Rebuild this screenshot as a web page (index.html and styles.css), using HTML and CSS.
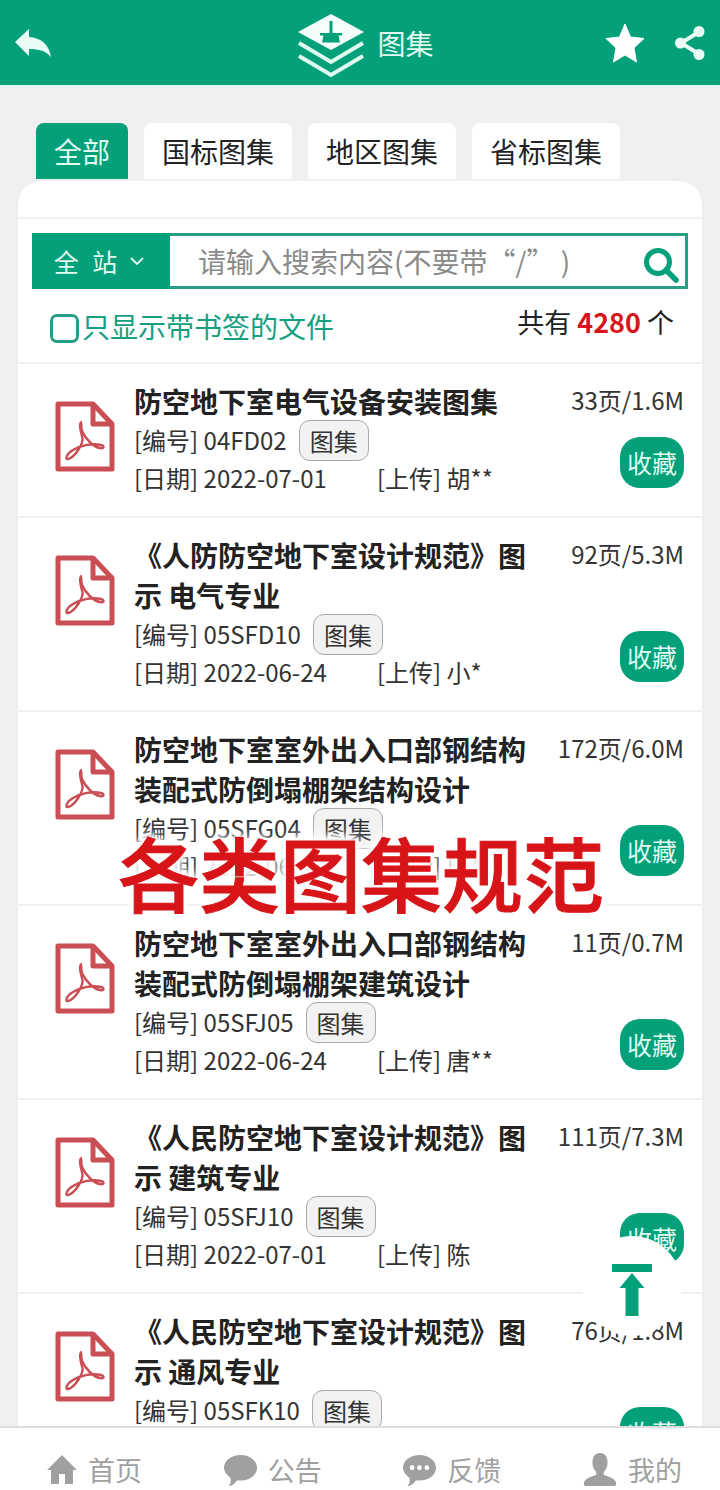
FILE: index.html
```html
<!DOCTYPE html>
<html lang="zh-CN">

<head>
    <meta charset="UTF-8">
    <meta name="viewport" content="width=device-width, initial-scale=1.0">
    <title>图集</title>
    <link rel="stylesheet" href="styles.css">
</head>

<body>
    <svg class="defs" width="0" height="0">
        <symbol id="pdf" viewBox="0 0 60 72">
            <path d="M3 3H38L57 23V68H3Z" fill="none" stroke="#c94f55" stroke-width="5" stroke-linejoin="round" />
            <path d="M38 3V23H57" fill="none" stroke="#c94f55" stroke-width="5" stroke-linejoin="round" />
            <path d="M27 21c-3 0-2 8 0 14c3 7-8 22-14 23c-3 1-2-5 5-9c8-5 20-7 28-5c4 1 3 4-1 3c-6-1-14-8-18-17c-1-4-1-9 0-9z" fill="none" stroke="#c94f55" stroke-width="2.4" />
        </symbol>
    </svg>

    <div class="page">
        <header class="topbar">
            <svg class="back" viewBox="0 0 38 30" width="38" height="30">
                <path d="M1 13L15 0V8C27 9 35 15 37 28C32 22 25 20 15 20V27Z" fill="#e9fbf5" />
            </svg>
            <div class="brand">
                <svg viewBox="0 0 68 64" width="68" height="64">
                    <path d="M34 0L67 18L34 36L1 18Z" fill="#f4fffb" />
                    <path d="M32.500 7h3v12h-3z M23 19h22v2.500h-22z M25 28.500l1.500-7h15l1.500 7z" fill="#03a07a" />
                    <path d="M2 29L34 48L66 29M2 42L34 61L66 42" fill="none" stroke="#dffaf1" stroke-width="4" />
                </svg>
                <span>图集</span>
            </div>
            <div class="top-actions">
                <svg viewBox="0 0 40 40" width="40" height="40">
                    <path d="M20 1L25.500 14L39 15.500L29 25L31.500 39L20 32L8.500 39L11 25L1 15.500L14.500 14Z" fill="#fff" stroke="#fff" stroke-linejoin="round" />
                </svg>
                <svg viewBox="0 0 32 36" width="32" height="36">
                    <path d="M25 7L7 18L25 29" fill="none" stroke="#e9fbf5" stroke-width="4" />
                    <circle cx="25" cy="6.500" r="5.500" fill="#e9fbf5" />
                    <circle cx="6.500" cy="18" r="5.500" fill="#e9fbf5" />
                    <circle cx="25" cy="29.500" r="5.500" fill="#e9fbf5" />
                </svg>
            </div>
        </header>

        <main class="content">
            <nav class="tabs">
                <a class="tab active">全部</a>
                <a class="tab">国标图集</a>
                <a class="tab">地区图集</a>
                <a class="tab">省标图集</a>
            </nav>

            <section class="panel">
                <div class="panel-head"></div>
                <div class="search">
                    <div class="scope">
                        <span>全 站</span>
                        <svg viewBox="0 0 14 8" width="14" height="8">
                            <path d="M1 1L7 7L13 1" fill="none" stroke="#e9fbf5" stroke-width="1.800" />
                        </svg>
                    </div>
                    <div class="search-input">请输入搜索内容(不要带“/”&nbsp;)</div>
                    <svg class="search-icon" viewBox="0 0 36 36" width="36" height="36">
                        <circle cx="15" cy="15" r="11.500" fill="none" stroke="#03a07a" stroke-width="5" />
                        <path d="M23 23L33 33" stroke="#03a07a" stroke-width="5.500" stroke-linecap="round" />
                    </svg>
                </div>
                <div class="filter">
                    <label class="only-marked"><i class="checkbox"></i>只显示带书签的文件</label>
                    <div class="total">共有 <b>4280</b> 个</div>
                </div>

                <ul class="list">
                    <li class="row">
                        <svg class="pdf-icon" width="60" height="72"><use href="#pdf" /></svg>
                        <div class="info">
                            <h3>防空地下室电气设备安装图集</h3>
                            <p>[编号] 04FD02<span class="tag">图集</span></p>
                            <p class="dates"><span class="date">[日期] 2022-07-01</span><span>[上传] 胡**</span></p>
                        </div>
                        <div class="side"><span>33页/1.6M</span><a class="fav">收藏</a></div>
                    </li>
                    <li class="row">
                        <svg class="pdf-icon" width="60" height="72"><use href="#pdf" /></svg>
                        <div class="info">
                            <h3>《人防防空地下室设计规范》图示 电气专业</h3>
                            <p>[编号] 05SFD10<span class="tag">图集</span></p>
                            <p class="dates"><span class="date">[日期] 2022-06-24</span><span>[上传] 小*</span></p>
                        </div>
                        <div class="side"><span>92页/5.3M</span><a class="fav">收藏</a></div>
                    </li>
                    <li class="row">
                        <svg class="pdf-icon" width="60" height="72"><use href="#pdf" /></svg>
                        <div class="info">
                            <h3>防空地下室室外出入口部钢结构装配式防倒塌棚架结构设计</h3>
                            <p>[编号] 05SFG04<span class="tag">图集</span></p>
                            <p class="dates"><span class="date">[日期] 2022-06-24</span><span>[上传] 唐**</span></p>
                        </div>
                        <div class="side"><span>172页/6.0M</span><a class="fav">收藏</a></div>
                    </li>
                    <li class="row">
                        <svg class="pdf-icon" width="60" height="72"><use href="#pdf" /></svg>
                        <div class="info">
                            <h3>防空地下室室外出入口部钢结构装配式防倒塌棚架建筑设计</h3>
                            <p>[编号] 05SFJ05<span class="tag">图集</span></p>
                            <p class="dates"><span class="date">[日期] 2022-06-24</span><span>[上传] 唐**</span></p>
                        </div>
                        <div class="side"><span>11页/0.7M</span><a class="fav">收藏</a></div>
                    </li>
                    <li class="row">
                        <svg class="pdf-icon" width="60" height="72"><use href="#pdf" /></svg>
                        <div class="info">
                            <h3>《人民防空地下室设计规范》图示 建筑专业</h3>
                            <p>[编号] 05SFJ10<span class="tag">图集</span></p>
                            <p class="dates"><span class="date">[日期] 2022-07-01</span><span>[上传] 陈</span></p>
                        </div>
                        <div class="side"><span>111页/7.3M</span><a class="fav">收藏</a></div>
                    </li>
                    <li class="row">
                        <svg class="pdf-icon" width="60" height="72"><use href="#pdf" /></svg>
                        <div class="info">
                            <h3>《人民防空地下室设计规范》图示 通风专业</h3>
                            <p>[编号] 05SFK10<span class="tag">图集</span></p>
                            <p class="dates"><span class="date">[日期] 2022-07-01</span><span>[上传] 陈</span></p>
                        </div>
                        <div class="side"><span>76页/1.8M</span><a class="fav">收藏</a></div>
                    </li>
                </ul>
            </section>
        </main>

        <footer class="tabbar">
            <a class="tabbar-item">
                <svg viewBox="0 0 32 32" width="32" height="32">
                    <path d="M16 1L31 16H27V30H19V20H13V30H5V16H1Z" fill="#a0a0a0" />
                </svg>首页
            </a>
            <a class="tabbar-item">
                <svg viewBox="0 0 36 36" width="35" height="33">
                    <path d="M18 1C28 1 36 7 36 15C36 23 28 29 18 29C16 29 15 29 14 29C12 32 9 35 5 35C7 33 8 29 7 26C3 23 0 19 0 15C0 7 8 1 18 1Z" fill="#a0a0a0" />
                </svg>公告
            </a>
            <a class="tabbar-item">
                <svg viewBox="0 0 36 36" width="35" height="33">
                    <path d="M18 1C28 1 36 7 36 15C36 23 28 29 18 29C16 29 15 29 14 29C12 32 9 35 5 35C7 33 8 29 7 26C3 23 0 19 0 15C0 7 8 1 18 1Z" fill="#a0a0a0" />
                    <circle cx="10" cy="15" r="2.600" fill="#fff" />
                    <circle cx="18" cy="15" r="2.600" fill="#fff" />
                    <circle cx="26" cy="15" r="2.600" fill="#fff" />
                </svg>反馈
            </a>
            <a class="tabbar-item">
                <svg viewBox="0 0 36 36" width="36" height="34">
                    <path d="M18 0C24 0 26 5 26 10C26 15 24 18 22 20V23C26 25 33 26 35 31C35 33 35 34 34 35H2C1 34 1 33 1 31C3 26 10 25 14 23V20C12 18 10 15 10 10C10 5 12 0 18 0Z" fill="#a0a0a0" />
                </svg>我的
            </a>
        </footer>

        <div class="banner">各类图集规范</div>

        <a class="to-top">
            <svg viewBox="0 0 40 52" width="40" height="52">
                <path d="M0 0H40V8H0Z M20 9L32.500 24H26.500V52H13.500V24H7.500Z" fill="#03a07a" />
            </svg>
        </a>
    </div>
</body>

</html>
```

FILE: styles.css
```css
* {
    margin: 0;
    padding: 0;
    box-sizing: border-box;
    font-family: "Noto Sans CJK SC", "Noto Sans", sans-serif;
}

html,
body {
    width: 720px;
    height: 1490px;
    overflow: hidden;
    background-color: #efefef;
}

.defs {
    display: block;
    height: 0;
}

.page {
    position: relative;
    display: flex;
    flex-direction: column;
    width: 720px;
    height: 1490px;
    overflow: hidden;
}

.topbar {
    display: flex;
    justify-content: space-between;
    align-items: center;
    flex: none;
    height: 86px;
    padding: 0 14px;
    border-bottom: 1px solid #dffaf1;
    background-color: #03a07a;
}

.back {
    margin-top: 3px;
}

.brand {
    display: flex;
    align-items: center;
    gap: 12px;
    margin-left: 74px;
    color: #dffaf1;
    font-size: 28px;
    line-height: 40px;
}

.brand svg {
    margin-top: 6px;
}

.top-actions {
    display: flex;
    align-items: center;
    gap: 29px;
}

.content {
    flex: 1;
    min-height: 0;
    padding: 37px 18px 0;
    overflow: hidden;
}

.tabs {
    display: flex;
    gap: 16px;
    padding-left: 18px;
    margin-bottom: 2px;
}

.tab {
    height: 56px;
    padding: 0 18px;
    border-radius: 8px 8px 0 0;
    background-color: #fff;
    color: #222;
    font-size: 28px;
    line-height: 56px;
}

.tab.active {
    background-color: #03a07a;
    color: #dffaf1;
}

.panel {
    border-radius: 24px 24px 0 0;
    background-color: #fff;
}

.panel-head {
    height: 38px;
    border-bottom: 2px solid #f2f2f2;
}

.search {
    position: relative;
    display: flex;
    height: 56px;
    margin: 14px 14px 0;
    border: 3px solid #2a9d88;
    border-left: none;
}

.scope {
    display: flex;
    justify-content: center;
    align-items: center;
    gap: 13px;
    flex: none;
    width: 138px;
    padding-right: 4px;
    margin-top: -3px;
    margin-bottom: -3px;
    background-color: #03a07a;
    color: #dffaf1;
    font-size: 25px;
    word-spacing: 8px;
}

.search-input {
    padding-left: 28px;
    color: #8a8a8a;
    font-size: 28px;
    line-height: 50px;
    white-space: nowrap;
}

.search-icon {
    position: absolute;
    top: 11px;
    right: 6px;
}

.filter {
    display: flex;
    justify-content: space-between;
    height: 73px;
    padding: 13px 28px 0 32px;
}

.only-marked {
    display: flex;
    align-items: center;
    gap: 3px;
    height: 46px;
    margin-top: 1px;
    color: #14a07f;
    font-size: 28px;
}

.checkbox {
    width: 29px;
    height: 29px;
    margin-top: 4px;
    border: 3px solid #2a9d88;
    border-radius: 7px;
}

.total {
    color: #222;
    font-size: 27px;
    line-height: 40px;
}

.total b {
    color: #d9141a;
    font-size: 27px;
}

.list {
    list-style: none;
}

.row {
    display: flex;
    padding: 17px 18px 19px 37px;
    border-top: 2px solid #f0f0f0;
}

.pdf-icon {
    flex: none;
    margin: 20px 19px 0 0;
}

.info {
    flex: 1;
    min-width: 0;
    color: #333;
    font-size: 24px;
    line-height: 38px;
}

.info h3 {
    width: 392px;
    color: #222;
    font-size: 28px;
    font-weight: 700;
    line-height: 40px;
}

.info p {
    display: flex;
    align-items: center;
    height: 38px;
    white-space: nowrap;
}

.tag {
    height: 41px;
    margin-left: 12px;
    padding: 0 10px;
    border: 1px solid #aaa;
    border-radius: 11px;
    background-color: #f2f2f2;
    font-size: 24px;
    line-height: 39px;
}

.date {
    width: 243px;
}

.side {
    display: flex;
    flex-direction: column;
    justify-content: space-between;
    align-items: flex-end;
    flex: none;
    margin-top: -1px;
    color: #333;
    font-size: 24px;
    line-height: 40px;
}

.fav {
    width: 64px;
    height: 51px;
    margin-bottom: 9px;
    border-radius: 20px;
    background-color: #03a07a;
    color: #dffaf1;
    font-size: 25px;
    line-height: 51px;
    text-align: center;
}

.tabbar {
    position: relative;
    display: flex;
    justify-content: space-between;
    align-items: center;
    flex: none;
    height: 64px;
    padding: 22px 38px 0 46px;
    border-top: 2px solid #ddd;
    background-color: #fff;
}

.tabbar-item {
    display: flex;
    align-items: center;
    gap: 10px;
    color: #a0a0a0;
    font-size: 27px;
    line-height: 40px;
}

.banner {
    position: absolute;
    top: 815px;
    left: 118px;
    color: #d71518;
    font-size: 81px;
    font-weight: 500;
    line-height: 112px;
    white-space: nowrap;
    -webkit-text-stroke: 1px #d71518;
    text-shadow: 0 0 4px #fff, 0 0 8px #fff, 0 0 8px #fff, 0 0 12px #fff, 0 0 12px #fff, 0 0 16px #fff;
}

.to-top {
    position: absolute;
    top: 1236px;
    left: 582px;
    display: flex;
    justify-content: center;
    align-items: center;
    width: 100px;
    height: 100px;
    padding-top: 8px;
    border-radius: 50%;
    background-color: #fff;
}
```
